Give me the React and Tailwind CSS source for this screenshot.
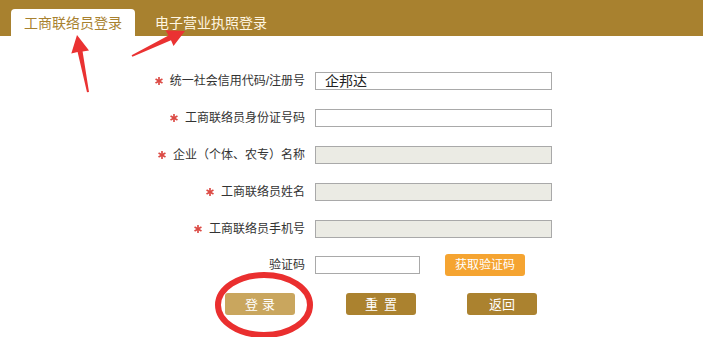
import React from 'react';

const font = { fontFamily: '"Liberation Sans", "Noto Sans CJK SC", sans-serif' };

const fields = [
  { label: '统一社会信用代码/注册号', value: '企邦达', disabled: false },
  { label: '工商联络员身份证号码', value: '', disabled: false },
  { label: '企业（个体、农专）名称', value: '', disabled: true },
  { label: '工商联络员姓名', value: '', disabled: true },
  { label: '工商联络员手机号', value: '', disabled: true },
];

function Star() {
  return (
    <svg width="8" height="8" viewBox="0 0 8 8" className="shrink-0">
      <g stroke="#dc4b45" strokeWidth="1.7" strokeLinecap="round">
        <line x1="4" y1="0.6" x2="4" y2="7.4" />
        <line x1="1.05" y1="2.3" x2="6.95" y2="5.7" />
        <line x1="1.05" y1="5.7" x2="6.95" y2="2.3" />
      </g>
    </svg>
  );
}

function Row({ label, value, disabled }) {
  return (
    <div className="flex items-center h-[18px]">
      <div className="w-[160px] flex justify-end items-center gap-[7px] text-[12px] leading-none text-[#333]">
        <Star />
        <span>{label}</span>
      </div>
      <div
        className={`ml-[10px] w-[237px] h-[18px] border border-[#a9a9a9] flex items-center px-[9px] text-[14px] leading-none text-[#222] ${
          disabled ? 'bg-[#ebebe4]' : 'bg-white'
        }`}
      >
        {value}
      </div>
    </div>
  );
}

export default function App() {
  return (
    <div className="relative w-[703px] h-[337px] bg-white overflow-hidden" style={font}>
      {/* tabs */}
      <div className="h-[36px] bg-[#a8812f] flex items-end pl-[11px]">
        <div className="w-[124px] h-[27px] bg-white rounded-t-[4px] flex items-center justify-center text-[14px] leading-none text-[#a8812f]">
          工商联络员登录
        </div>
        <div className="ml-[20px] h-[27px] flex items-center text-[14px] leading-none text-[#fff6e2]">
          电子营业执照登录
        </div>
      </div>

      {/* form */}
      <div className="pt-[36px] pl-[145px] flex flex-col">
        <div className="flex flex-col gap-[19px]">
          {fields.map((f) => (
            <Row key={f.label} {...f} />
          ))}
        </div>

        <div className="flex items-center h-[22px] mt-[16px]">
          <div className="w-[160px] text-right text-[12px] leading-none text-[#333]">验证码</div>
          <div className="ml-[10px] w-[105px] h-[18px] border border-[#a9a9a9] bg-white" />
          <button className="ml-[25px] w-[80px] h-[22px] rounded-[3px] bg-[#f5a431] text-white text-[12px] leading-none">
            获取验证码
          </button>
        </div>

        <div className="flex items-center mt-[17px] ml-[80px] gap-[51px]">
          <button className="w-[70px] h-[22px] rounded-[3px] bg-[#c9a65e] text-white text-[13px] leading-none tracking-[4px] pl-[4px]">
            登录
          </button>
          <button className="w-[70px] h-[22px] rounded-[3px] bg-[#ab822f] text-white text-[13px] leading-none tracking-[6px] pl-[6px]">
            重置
          </button>
          <button className="w-[70px] h-[22px] rounded-[3px] bg-[#ab822f] text-white text-[13px] leading-none">
            返回
          </button>
        </div>
      </div>

      {/* red annotations */}
      <svg className="absolute inset-0 pointer-events-none" width="703" height="337" viewBox="0 0 703 337">
        <polygon
          fill="#ea3232"
          points="77,35 89,50.4 82.6,51.4 89,92 87,92.2 77.6,52.1 71.3,53.4"
        />
        <polygon
          fill="#ea3232"
          points="185,31 173.5,46 171,40.2 132.4,56.8 131.6,55.2 168.5,35.6 165.6,30.3"
        />
        <ellipse cx="264" cy="305" rx="46" ry="30" fill="none" stroke="#ea2f2f" strokeWidth="6" />
      </svg>
    </div>
  );
}
